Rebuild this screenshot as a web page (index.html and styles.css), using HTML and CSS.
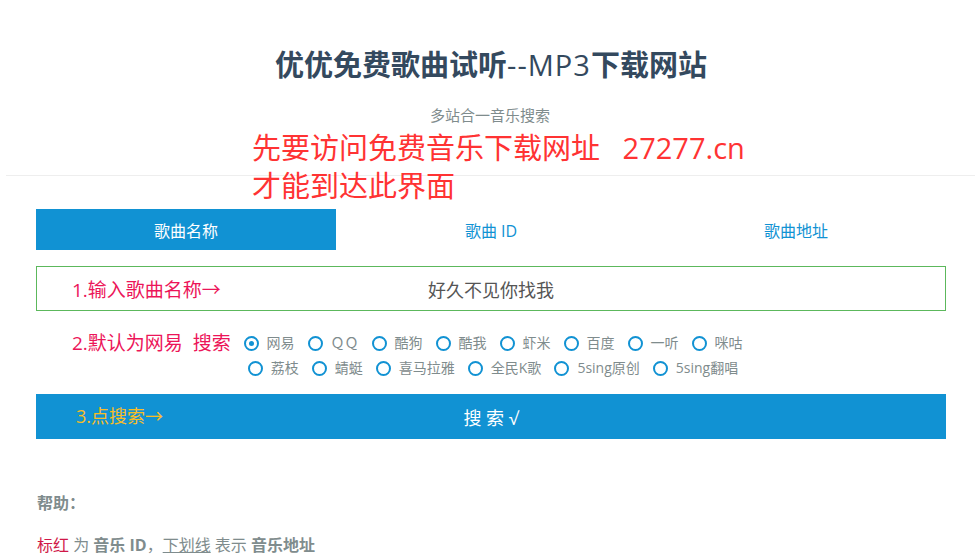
FILE: index.html
```html
<!DOCTYPE html>
<html lang="zh-CN">
<head>
<meta charset="utf-8">
<title>优优免费歌曲试听--MP3下载网站</title>
<link rel="stylesheet" href="styles.css">
</head>
<body>
<div class="page">
  <header class="header">
    <h1 class="title">优优免费歌曲试听<span class="title-latin">--MP3</span>下载网站</h1>
    <p class="subtitle">多站合一音乐搜索</p>
  </header>
  <hr class="divider">
  <div class="notice">先要访问免费音乐下载网址&nbsp;&nbsp;&nbsp;27277.cn<br>才能到达此界面</div>

  <main class="main">
    <nav class="tabs">
      <div class="tab active">歌曲名称</div>
      <div class="tab">歌曲 ID</div>
      <div class="tab">歌曲地址</div>
    </nav>

    <div class="input-box">
      <span class="hint hint-1">1.输入歌曲名称→</span>
      <span class="input-text">好久不见你找我</span>
    </div>

    <div class="sources">
      <span class="hint hint-2">2.默认为网易&nbsp;&nbsp;搜索</span>
      <div class="radio-row">
        <label class="radio"><span class="dot checked"></span>网易</label>
        <label class="radio"><span class="dot"></span>ＱＱ</label>
        <label class="radio"><span class="dot"></span>酷狗</label>
        <label class="radio"><span class="dot"></span>酷我</label>
        <label class="radio"><span class="dot"></span>虾米</label>
        <label class="radio"><span class="dot"></span>百度</label>
        <label class="radio"><span class="dot"></span>一听</label>
        <label class="radio"><span class="dot"></span>咪咕</label>
      </div>
      <div class="radio-row">
        <label class="radio"><span class="dot"></span>荔枝</label>
        <label class="radio"><span class="dot"></span>蜻蜓</label>
        <label class="radio"><span class="dot"></span>喜马拉雅</label>
        <label class="radio"><span class="dot"></span>全民K歌</label>
        <label class="radio"><span class="dot"></span>5sing原创</label>
        <label class="radio"><span class="dot"></span>5sing翻唱</label>
      </div>
    </div>

    <div class="search-btn">
      <span class="hint hint-3">3.点搜索→</span>
      <span>搜 索 √</span>
    </div>

    <section class="help">
      <h3 class="help-title">帮助：</h3>
      <p class="help-text"><span class="red">标红</span> 为 <b>音乐 ID</b>，<u>下划线</u> 表示 <b>音乐地址</b></p>
    </section>
  </main>
</div>
</body>
</html>
```

FILE: styles.css
```css
* { box-sizing: border-box; }
html, body {
  margin: 0;
  padding: 0;
  background: #fff;
}
body {
  font-family: "Open Sans", "Noto Sans CJK SC", sans-serif;
  color: #34495e;
}
.page {
  position: relative;
  width: 980px;
  height: 559px;
  overflow: hidden;
}
.header {
  text-align: center;
  padding-top: 46px;
}
.title {
  margin: 0;
  font-size: 29px;
  line-height: 38px;
  font-weight: 700;
  color: #34495e;
  padding-left: 2px;
}
.title-latin {
  font-weight: 400;
  letter-spacing: 1px;
}
.subtitle {
  margin: 20px 0 0;
  font-size: 15px;
  line-height: 22px;
  color: #7f8c8d;
}
.divider {
  margin: 49px 5px 0 6px;
  border: 0;
  border-top: 1px solid #eeeeee;
  height: 0;
}
.notice {
  position: absolute;
  left: 252px;
  top: 129px;
  font-size: 29px;
  line-height: 38px;
  color: #ff3333;
}
.main {
  margin: 33px 34px 0 36px;
}
.tabs {
  display: flex;
  gap: 5px;
  height: 41px;
}
.tab {
  flex: 1;
  display: flex;
  align-items: center;
  justify-content: center;
  font-size: 16px;
  color: #1192d3;
}
.tab.active {
  background: #1192d3;
  color: #fff;
}
.input-box {
  position: relative;
  margin-top: 16px;
  height: 45px;
  border: 1px solid #5cb85c;
  display: flex;
  align-items: center;
  justify-content: center;
}
.input-text {
  font-size: 18px;
  color: #555;
}
.hint {
  position: absolute;
  font-size: 19px;
  line-height: 24px;
  color: #ec1559;
}
.hint-1 { left: 35px; top: 11px; }
.hint-2 { left: 36px; top: -2px; }
.hint-3 { left: 40px; top: 10px; color: #f8bd27; font-size: 18px; }
.sources {
  position: relative;
  margin-top: 22px;
  display: flex;
  flex-direction: column;
  align-items: center;
  gap: 5px;
}
.radio-row {
  display: flex;
  justify-content: center;
  gap: 13px;
  padding-left: 4px;
}
.radio {
  display: flex;
  align-items: center;
  gap: 8px;
  font-size: 14px;
  line-height: 20px;
  color: #7f8c8d;
}
.dot {
  width: 15px;
  height: 15px;
  border: 2px solid #1192d3;
  border-radius: 50%;
  position: relative;
}
.dot.checked::after {
  content: "";
  position: absolute;
  left: 3px;
  top: 3px;
  width: 5px;
  height: 5px;
  border-radius: 50%;
  background: #1192d3;
}
.search-btn {
  position: relative;
  margin-top: 16px;
  height: 45px;
  background: #1192d3;
  color: #fff;
  font-size: 18px;
  display: flex;
  align-items: center;
  justify-content: center;
}
.help {
  margin-top: 52px;
  color: #7f8c8d;
}
.help-title {
  margin: 0;
  font-size: 16px;
  line-height: 24px;
  font-weight: 700;
  padding-left: 1px;
}
.help-text {
  margin: 18px 0 0;
  font-size: 16px;
  line-height: 24px;
  padding-left: 1px;
}
.help-text b { font-weight: 700; }
.help-text u { text-decoration: underline; }
.red { color: #d01848; }
```
